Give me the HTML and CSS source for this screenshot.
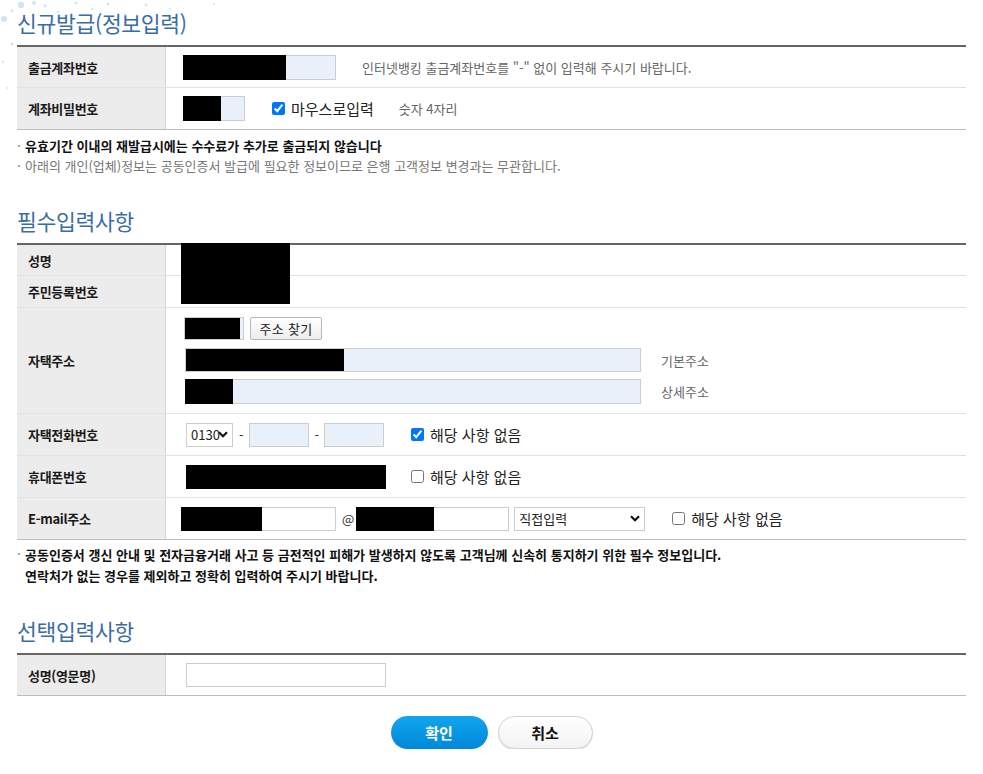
FILE: index.html
```html
<!DOCTYPE html>
<html lang="ko">
<head>
<meta charset="utf-8">
<title>신규발급(정보입력)</title>
<link rel="stylesheet" href="styles.css">
</head>
<body>
<div class="page">
  <svg class="deco" width="260" height="110" viewBox="0 0 260 110" aria-hidden="true">
    <g fill="#cfe6f6">
      <circle cx="21" cy="5" r="3.2"/>
      <circle cx="34" cy="3" r="2"/>
      <circle cx="45" cy="6" r="1.6"/>
      <circle cx="4" cy="19" r="3"/>
      <circle cx="12" cy="11" r="1.4"/>
      <circle cx="58" cy="12" r="1.3"/>
      <circle cx="76" cy="3" r="1.6"/>
      <circle cx="92" cy="9" r="1.2"/>
      <circle cx="108" cy="4" r="1.5"/>
      <circle cx="125" cy="14" r="1.1"/>
      <circle cx="146" cy="5" r="1.4"/>
      <circle cx="170" cy="9" r="1"/>
      <circle cx="12" cy="44" r="1.4"/>
      <circle cx="3" cy="62" r="1.2"/>
      <circle cx="7" cy="88" r="1"/>
      <circle cx="62" cy="30" r="1"/>
      <circle cx="214" cy="4" r="1"/>
    </g>
  </svg>

  <h2 class="sec-title">신규발급(정보입력)</h2>
  <div class="tbl">
    <div class="row first">
      <div class="th">출금계좌번호</div>
      <div class="td pl17">
        <span class="fld w153 h25"><span class="redact r103"></span></span>
        <span class="help ml26">인터넷뱅킹 출금계좌번호를 "-" 없이 입력해 주시기 바랍니다.</span>
      </div>
    </div>
    <div class="row h41 last">
      <div class="th">계좌비밀번호</div>
      <div class="td pl17">
        <span class="fld w62 h25"><span class="redact r38 out"></span></span>
        <label class="chk ml27"><input type="checkbox" checked><span>마우스로입력</span></label>
        <span class="help ml25">숫자 4자리</span>
      </div>
    </div>
  </div>
  <ul class="notes n1">
    <li class="strong">유효기간 이내의 재발급시에는 수수료가 추가로 출금되지 않습니다</li>
    <li class="muted">아래의 개인(업체)정보는 공동인증서 발급에 필요한 정보이므로 은행 고객정보 변경과는 무관합니다.</li>
  </ul>

  <h2 class="sec-title">필수입력사항</h2>
  <div class="tbl">
    <span class="redact-over"></span>
    <div class="row h30">
      <div class="th">성명</div>
      <div class="td"></div>
    </div>
    <div class="row h31">
      <div class="th">주민등록번호</div>
      <div class="td"></div>
    </div>
    <div class="row h105">
      <div class="th">자택주소</div>
      <div class="td addr">
        <div class="line">
          <span class="fld w60 h23"><span class="redact r55"></span></span>
          <button class="btn-sm" type="button">주소 찾기</button>
        </div>
        <div class="line ml1">
          <span class="fld w456 h24"><span class="redact r158"></span></span>
          <span class="help ml20">기본주소</span>
        </div>
        <div class="line ml1">
          <span class="fld w456 h25"><span class="redact r48 out"></span></span>
          <span class="help ml20">상세주소</span>
        </div>
      </div>
    </div>
    <div class="row h41">
      <div class="th">자택전화번호</div>
      <div class="td pl20">
        <select class="sel w47"><option>0130</option></select>
        <span class="dash">-</span>
        <span class="fld w60 h24"></span>
        <span class="dash">-</span>
        <span class="fld w60 h24"></span>
        <label class="chk ml27"><input type="checkbox" checked><span>해당 사항 없음</span></label>
      </div>
    </div>
    <div class="row h41">
      <div class="th">휴대폰번호</div>
      <div class="td pl20">
        <span class="redact block w200 h24"></span>
        <label class="chk ml25"><input type="checkbox"><span>해당 사항 없음</span></label>
      </div>
    </div>
    <div class="row h41 last">
      <div class="th">E-mail주소</div>
      <div class="td pl15">
        <span class="fld white w155 h24"><span class="redact r81 out"></span></span>
        <span class="at">@</span>
        <span class="fld white w153 h24"><span class="redact r78 out"></span></span>
        <select class="sel w131 ml5"><option>직접입력</option></select>
        <label class="chk ml27"><input type="checkbox"><span>해당 사항 없음</span></label>
      </div>
    </div>
  </div>
  <ul class="notes n2">
    <li class="strong">공동인증서 갱신 안내 및 전자금융거래 사고 등 금전적인 피해가 발생하지 않도록 고객님께 신속히 통지하기 위한 필수 정보입니다.<br>연락처가 없는 경우를 제외하고 정확히 입력하여 주시기 바랍니다.</li>
  </ul>

  <h2 class="sec-title">선택입력사항</h2>
  <div class="tbl">
    <div class="row first last">
      <div class="th">성명(영문명)</div>
      <div class="td pl20">
        <span class="fld white w200 h24"></span>
      </div>
    </div>
  </div>

  <div class="actions">
    <button class="btn primary" type="button">확인</button>
    <button class="btn secondary" type="button">취소</button>
  </div>
</div>
</body>
</html>
```

FILE: styles.css
```css
* { box-sizing: border-box; }

html, body {
  margin: 0;
  padding: 0;
  background: #fff;
}

body {
  font-family: "Noto Sans CJK KR", "Malgun Gothic", "Noto Sans", sans-serif;
  color: #222;
  font-size: 13px;
}

.page {
  position: relative;
  padding: 8px 17px 0;
}

.deco {
  position: absolute;
  left: 0;
  top: 0;
  pointer-events: none;
}

.sec-title {
  position: relative;
  margin: 0 0 7px;
  font-size: 21.5px;
  line-height: 30px;
  font-weight: 400;
  color: #3a6ca6;
  letter-spacing: -0.3px;
}

/* tables */
.tbl {
  position: relative;
  border-top: 2px solid #666;
}

.row {
  display: grid;
  grid-template-columns: 149px 1fr;
  border-bottom: 1px solid #e2e2e2;
  height: 41px;
  box-sizing: content-box;
}
.row.first { height: 40px; }
.row.h30 { height: 30px; }
.row.h31 { height: 31px; }
.row.h41 { height: 41px; }
.row.h105 { height: 105px; }
.row.last { border-bottom-color: #bdbdbd; }

.th {
  background: #ececec;
  border-right: 1px solid #d6d6d6;
  display: flex;
  align-items: center;
  padding-left: 11px;
  font-weight: 700;
  font-size: 13px;
  color: #1a1a1a;
  letter-spacing: -0.3px;
}

.td {
  display: flex;
  align-items: center;
  min-width: 0;
}

.pl15 { padding-left: 15px; }
.pl17 { padding-left: 17px; }
.pl20 { padding-left: 20px; }

.ml1 { margin-left: 1px; }
.ml5 { margin-left: 5px; }
.ml20 { margin-left: 20px; }
.ml25 { margin-left: 25px; }
.ml26 { margin-left: 26px; }
.ml27 { margin-left: 27px; }

/* fields */
.fld {
  display: inline-flex;
  align-items: stretch;
  border: 1px solid #cdcdcd;
  background: #e8f0fa;
  flex: none;
}
.fld.white { background: #fff; }

.w47 { width: 47px; }
.w60 { width: 60px; }
.w62 { width: 62px; }
.w131 { width: 131px; }
.w153 { width: 153px; }
.w155 { width: 155px; }
.w200 { width: 200px; }
.w456 { width: 456px; }
.h23 { height: 23px; }
.h24 { height: 24px; }
.h25 { height: 25px; }

.redact {
  display: block;
  background: #000;
  flex: none;
}
.redact.out { margin: -1px 0 -1px -1px; }
.redact.block { display: inline-block; }
.r38 { width: 38px; }
.r48 { width: 48px; }
.r55 { width: 55px; }
.r78 { width: 78px; }
.r81 { width: 81px; }
.r103 { width: 103px; margin: -1px 0 -1px -1px; }
.r158 { width: 158px; }

.redact-over {
  position: absolute;
  left: 164px;
  top: -2px;
  width: 109px;
  height: 61px;
  background: #000;
  z-index: 2;
}

.help {
  color: #666;
  font-size: 13px;
  white-space: nowrap;
}

.chk {
  display: inline-flex;
  align-items: center;
  font-size: 15px;
  color: #222;
  white-space: nowrap;
}
.chk input {
  margin: 0 6px 0 0;
  width: 13px;
  height: 13px;
}

.sel {
  -webkit-appearance: none;
  appearance: none;
  height: 24px;
  border: 1px solid #cdcdcd;
  border-radius: 0;
  background-color: #fff;
  background-image: url("data:image/svg+xml,%3Csvg xmlns='http://www.w3.org/2000/svg' width='10' height='7' viewBox='0 0 10 7'%3E%3Cpath d='M1 1.2l4 4 4-4' fill='none' stroke='%23111' stroke-width='2.2'/%3E%3C/svg%3E");
  background-repeat: no-repeat;
  background-position: right 4px center;
  background-size: 10px 7px;
  font-family: inherit;
  font-size: 13px;
  color: #222;
  padding: 0 0 0 4px;
}

.dash {
  font-size: 13px;
  margin: 0 5px 0 6px;
  color: #333;
}

.at {
  font-size: 13px;
  margin: 0 2px 0 6px;
  color: #333;
}

/* address */
.td.addr {
  flex-direction: column;
  align-items: flex-start;
  justify-content: flex-start;
  padding: 9px 0 0 18px;
  gap: 8px;
}
.td.addr .line {
  display: flex;
  align-items: center;
}
.td.addr .line + .line + .line { margin-top: -1px; }

.btn-sm {
  margin-left: 6px;
  width: 72px;
  height: 23px;
  border: 1px solid #b8b8b8;
  border-radius: 2px;
  background: linear-gradient(#ffffff, #ededed);
  font-family: inherit;
  font-size: 13px;
  color: #222;
  padding: 0;
  letter-spacing: 0.3px;
}

/* notes */
.notes {
  list-style: none;
  margin: 0;
  padding: 0;
  font-size: 13px;
}
.notes.n1 { margin: 6px 0 30px; line-height: 20px; }
.notes.n2 { margin: 4px 0 30px; line-height: 21px; }
.notes li {
  display: flex;
  align-items: flex-start;
}
.notes li::before {
  content: "";
  flex: none;
  width: 2px;
  height: 2px;
  background: #aaa;
  margin: 9px 5px 0 1px;
}
.notes li.strong { font-weight: 700; color: #111; }
.notes li.muted { color: #777; }

/* actions */
.actions {
  display: flex;
  justify-content: center;
  gap: 10px;
  margin-top: 20px;
}
.btn {
  height: 33px;
  border-radius: 17px;
  font-family: inherit;
  font-size: 15px;
  font-weight: 700;
  padding: 0;
}
.btn.primary {
  width: 97px;
  border: 0;
  color: #fff;
  background: linear-gradient(#12a6ee, #0087d9);
}
.btn.secondary {
  width: 95px;
  border: 1px solid #d2d2d2;
  color: #111;
  background: linear-gradient(#ffffff, #f3f3f3);
  box-shadow: 0 1px 1px rgba(0, 0, 0, 0.18);
}
```
